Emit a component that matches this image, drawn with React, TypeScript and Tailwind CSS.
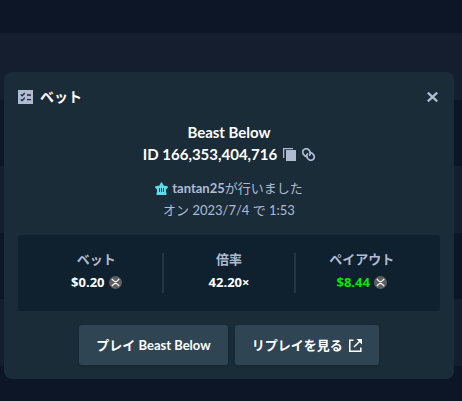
import type { ReactNode } from 'react'

function SlipIcon() {
  return (
    <svg width="15" height="14" viewBox="0 0 15 14" fill="none" aria-hidden="true">
      <path d="M0 0h15v14H0z" fill="#b1bad3" />
      <path d="M2.800 4.600l1.300 1.200L6.800 3M2.800 9.400l1.300 1.200L6.800 7.800M9 5h4M9 9.600h4" stroke="#1a2c38" strokeWidth="1.300" />
    </svg>
  )
}

function CloseIcon() {
  return (
    <svg width="11" height="10" viewBox="0 0 11 10" fill="none" stroke="currentColor" strokeWidth="2.300" aria-hidden="true">
      <path d="M.8.6l9.400 8.800M10.200.6L.8 9.400" />
    </svg>
  )
}

function CopyIcon() {
  return (
    <svg width="13" height="13" viewBox="0 0 13 13" fill="currentColor" aria-hidden="true">
      <path d="M0 0h10v1.300H1.300V10H0z" />
      <path d="M3 2h10v11H3z" />
    </svg>
  )
}

function LinkIcon() {
  return (
    <svg width="13" height="13" viewBox="0 0 13 13" fill="none" stroke="currentColor" strokeWidth="1.700" aria-hidden="true">
      <path d="M5.800 8.200C4 8.700 2.300 7.700 1.300 6C.3 4.100.8 2.100 2.400 1.200C4.200.3 6.400 1.100 7.600 2.900C8.800 4.700 8.500 6.600 7 7.600" />
      <path d="M7.200 4.800C9 4.300 10.700 5.300 11.700 7C12.700 8.900 12.200 10.900 10.600 11.800C8.800 12.700 6.600 11.900 5.400 10.100C4.200 8.300 4.500 6.400 6 5.400" />
    </svg>
  )
}

function StarIcon() {
  return (
    <svg width="13" height="13" viewBox="0 0 13 13" aria-hidden="true">
      <path
        d="M6.500 .8l1.900 3.400 4 .7-2.200 3.100.8 4.300H2l.8-4.300L.6 4.900l4-.7z"
        fill="#62dbe8"
        stroke="#62dbe8"
        strokeWidth="1.200"
        strokeLinejoin="round"
      />
      <path d="M4.500 6v4M6.500 6v4M8.500 6v4" stroke="#1a2c38" strokeWidth=".9" />
    </svg>
  )
}

function XrpIcon() {
  return (
    <svg width="13" height="13" viewBox="0 0 13 13" fill="none" aria-hidden="true">
      <circle cx="6.500" cy="6.500" r="6.500" fill="#5f5f5f" />
      <path
        d="M2.800 3l2 1.900c1 .9 2.400.9 3.400 0l2-1.900M2.800 10l2-1.900c1-.9 2.400-.9 3.400 0l2 1.900"
        stroke="#fff"
        strokeWidth="1.100"
      />
    </svg>
  )
}

function ExternalIcon() {
  return (
    <svg width="13" height="13" viewBox="0 0 13 13" fill="none" stroke="currentColor" strokeWidth="1.500" aria-hidden="true">
      <path d="M4.500 1.200H.8v11h11V8.500M5 8l6-6" />
      <path d="M7.500 0H13v5.500z" fill="currentColor" stroke="none" />
    </svg>
  )
}

function Stat({ label, children }: { label: string; children: ReactNode }) {
  return (
    <div className="flex flex-1 flex-col items-center gap-px">
      <dt className="font-semibold text-[#b1bad3]">{label}</dt>
      <dd className="flex items-center gap-1 font-['Open_Sans',sans-serif] font-bold">{children}</dd>
    </div>
  )
}

function Divider() {
  return <div className="h-10 w-0.5 self-end bg-[#213743]" />
}

export default function App() {
  const buttonClass =
    'flex h-10 items-center gap-1.5 rounded-[3px] bg-[#2f4553] px-[17px] font-bold text-white shadow-sm'

  return (
    <div className="min-h-screen bg-[repeating-linear-gradient(#0d1627_0_33px,#151e2e_33px_100px,#0d1627_100px_133px)] pt-[72px] pr-2 pl-1 font-[Lato,'Noto_Sans_CJK_JP',sans-serif] text-[13px] leading-[22px] text-white">
      <section role="dialog" aria-labelledby="bet-title" className="rounded-lg bg-[#1a2c38] px-3.5 pb-3.5">
        <header className="flex h-[49px] items-center justify-between text-[#b1bad3]">
          <div className="flex items-center gap-[7px]">
            <SlipIcon />
            <h1 id="bet-title" className="text-sm font-semibold text-white">ベット</h1>
          </div>
          <button type="button" aria-label="閉じる" className="px-0.5">
            <CloseIcon />
          </button>
        </header>

        <div className="flex flex-col items-center text-[15px] font-bold">
          <h2>Beast Below</h2>
          <div className="flex items-center gap-1.5">
            <span>ID 166,353,404,716</span>
            <button type="button" aria-label="IDをコピー" className="text-[#b1bad3]">
              <CopyIcon />
            </button>
            <button type="button" aria-label="リンクをコピー" className="text-[#b1bad3]">
              <LinkIcon />
            </button>
          </div>
        </div>

        <div className="mt-3 flex flex-col items-center text-[#b1bad3]">
          <div className="flex items-center gap-1">
            <StarIcon />
            <p>
              <a href="#tantan25" className="font-bold">tantan25</a>が行いました
            </p>
          </div>
          <p>オン 2023/7/4 で 1:53</p>
        </div>

        <dl className="mt-3.5 flex rounded-[3px] bg-[#0f212e] px-[13px] pt-[13px] pb-[18px]">
          <Stat label="ベット">
            $0.20 <XrpIcon />
          </Stat>
          <Divider />
          <Stat label="倍率">42.20×</Stat>
          <Divider />
          <Stat label="ペイアウト">
            <span className="text-[#00e701]">$8.44</span>
            <XrpIcon />
          </Stat>
        </dl>

        <div className="mt-3.5 flex justify-center gap-[7px]">
          <button type="button" className={buttonClass}>プレイ Beast Below</button>
          <button type="button" className={buttonClass}>
            リプレイを見る
            <ExternalIcon />
          </button>
        </div>
      </section>
    </div>
  )
}
